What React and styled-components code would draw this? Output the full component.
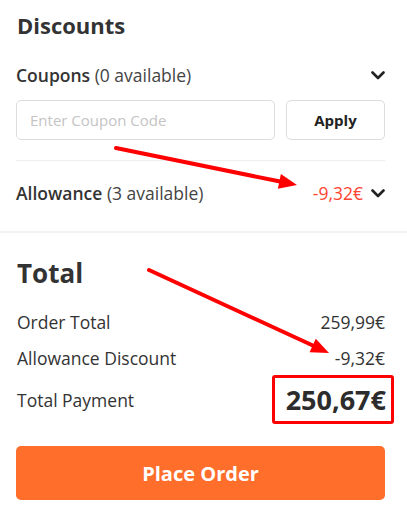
import React from "react";
import styled, { createGlobalStyle } from "styled-components";

const GlobalStyle = createGlobalStyle`
  body {
    margin: 0;
    background: #fff;
    font-family: "Open Sans", "Liberation Sans", sans-serif;
    color: #333;
  }
`;

const Page = styled.div`
  position: relative;
  width: 407px;
  height: 514px;
  overflow: hidden;
`;

const Section = styled.div`
  padding: ${(p) => p.$pad || "0 22px 0 16px"};
  border-bottom: ${(p) => (p.$divided ? "2px solid #f2f2f2" : "none")};
`;

const Heading = styled.h2`
  margin: 0;
  font-size: ${(p) => p.$size || "22px"};
  font-weight: 700;
  line-height: 30px;
  color: #333;
  padding-left: 1px;
`;

const ToggleRow = styled.div`
  display: flex;
  align-items: center;
  justify-content: space-between;
  height: ${(p) => p.$h || "40px"};
  margin-top: ${(p) => p.$mt || "0"};
  font-size: 17.5px;
  color: #333;
  border-top: ${(p) => (p.$line ? "1px solid #eee" : "none")};
`;

const Label = styled.span`
  font-weight: ${(p) => (p.$bold ? 600 : 400)};
`;

const Sub = styled.span`
  font-weight: 400;
  color: #444;
`;

const Right = styled.div`
  display: flex;
  align-items: center;
  gap: 8px;
`;

const RedValue = styled.span`
  color: #ff4433;
  font-size: 17.5px;
`;

const Chevron = () => (
  <svg width="14" height="9" viewBox="0 0 14 9" fill="none">
    <path d="M1.5 1.5L7 7L12.5 1.5" stroke="#222" strokeWidth="2.6" strokeLinecap="round" strokeLinejoin="round" />
  </svg>
);

const CouponForm = styled.div`
  display: flex;
  gap: 11px;
  padding: 0 0 20px;
`;

const CodeInput = styled.input`
  flex: 1;
  height: 40px;
  box-sizing: border-box;
  border: 1px solid #dcdcdc;
  border-radius: 5px;
  padding: 0 13px;
  font-family: inherit;
  font-size: 15px;
  color: #333;
  outline: none;
  &::placeholder {
    color: #c4c4c4;
  }
`;

const ApplyButton = styled.button`
  width: 99px;
  height: 40px;
  box-sizing: border-box;
  border: 1px solid #dcdcdc;
  border-radius: 5px;
  background: #fff;
  font-family: inherit;
  font-size: 15px;
  font-weight: 700;
  color: #222;
`;

const Lines = styled.div`
  display: flex;
  flex-direction: column;
  padding-top: 16px;
`;

const Line = styled.div`
  display: flex;
  align-items: center;
  justify-content: space-between;
  height: ${(p) => p.$h || "36px"};
  font-size: 17.5px;
  color: #333;
  padding-left: 1px;
`;

const BigTotal = styled.div`
  border: 3px solid #ff0000;
  border-radius: 3px;
  padding: 2px 5px 2px 11px;
  margin-right: -9px;
  font-size: 27px;
  font-weight: 700;
  color: #2c2c2c;
  line-height: 39px;
`;

const OrderButton = styled.button`
  display: block;
  width: 100%;
  height: 54px;
  margin-top: 23px;
  border: none;
  border-radius: 5px;
  background: #ff6e2a;
  color: #fff;
  font-family: inherit;
  font-size: 20px;
  font-weight: 700;
`;

const Overlay = styled.svg`
  position: absolute;
  left: 0;
  top: 0;
  pointer-events: none;
`;

const Arrow = ({ x1, y1, x2, y2 }) => {
  const dx = x2 - x1;
  const dy = y2 - y1;
  const len = Math.hypot(dx, dy);
  const ux = dx / len;
  const uy = dy / len;
  const hl = 18;
  const hw = 7.5;
  const bx = x2 - ux * hl;
  const by = y2 - uy * hl;
  const pts = `${x2},${y2} ${bx - uy * hw},${by + ux * hw} ${bx + uy * hw},${by - ux * hw}`;
  return (
    <g>
      <line x1={x1} y1={y1} x2={bx + ux * 2} y2={by + uy * 2} stroke="#ff0000" strokeWidth="4" strokeLinecap="round" />
      <polygon points={pts} fill="#ff0000" />
    </g>
  );
};

export default function App() {
  return (
    <>
      <GlobalStyle />
      <Page>
        <Section $divided $pad="10px 22px 6px 16px">
          <Heading>Discounts</Heading>
          <ToggleRow $h="50px" $mt="10px">
            <Label $bold>
              Coupons <Sub>(0 available)</Sub>
            </Label>
            <Chevron />
          </ToggleRow>
          <CouponForm>
            <CodeInput placeholder="Enter Coupon Code" />
            <ApplyButton>Apply</ApplyButton>
          </CouponForm>
          <ToggleRow $line $h="64px">
            <Label $bold>
              Allowance <Sub>(3 available)</Sub>
            </Label>
            <Right>
              <RedValue>-9,32€</RedValue>
              <Chevron />
            </Right>
          </ToggleRow>
        </Section>
        <Section $pad="25px 22px 0 16px">
          <Heading $size="26px">Total</Heading>
          <Lines>
            <Line>
              <span>Order Total</span>
              <span>259,99€</span>
            </Line>
            <Line>
              <span>Allowance Discount</span>
              <span>-9,32€</span>
            </Line>
            <Line $h="47px">
              <span>Total Payment</span>
              <BigTotal>250,67€</BigTotal>
            </Line>
          </Lines>
          <OrderButton>Place Order</OrderButton>
        </Section>
        <Overlay width="407" height="514">
          <Arrow x1={116} y1={148} x2={297} y2={185} />
          <Arrow x1={149} y1={270} x2={329} y2={353} />
        </Overlay>
      </Page>
    </>
  );
}
